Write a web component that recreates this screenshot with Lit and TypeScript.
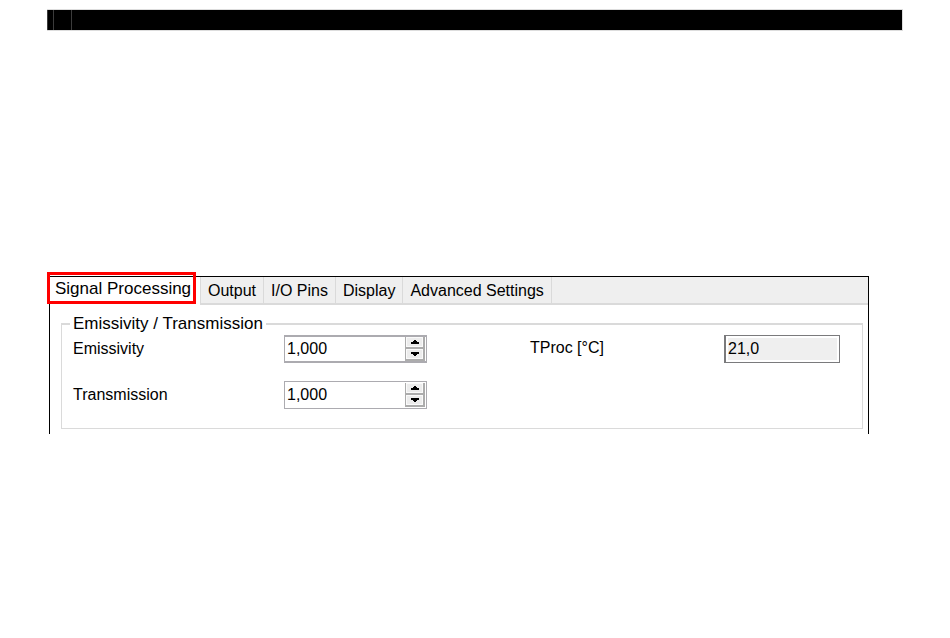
import { LitElement, html, css } from 'lit';
import { customElement, property, state } from 'lit/decorators.js';

@customElement('spin-field')
export class SpinField extends LitElement {
  @property({ type: String })
  label = '';

  @property({ type: Number })
  value = 1;

  static override styles = css`
    :host {
      display: contents;
    }
    .label {
      line-height: 28px;
    }
    .box {
      box-sizing: border-box;
      display: flex;
      align-items: center;
      width: 143px;
      height: 28px;
      border: 1px solid #acabb0;
      background: #fff;
    }
    :host([heavy]) .box {
      border-width: 2px 1px;
    }
    .input {
      flex: 1;
      min-width: 0;
      padding: 0 2px;
      border: 0;
      outline: 0;
      background: transparent;
      color: #000;
      font: inherit;
    }
    .buttons {
      display: flex;
      flex-direction: column;
      gap: 2px;
      box-sizing: border-box;
      width: 20px;
      height: 24px;
      margin-right: 1px;
      padding: 0 2px 2px 1px;
      background: #acacac;
    }
    .step {
      flex: 1;
      display: flex;
      align-items: center;
      justify-content: center;
      padding: 0;
      border: 1px solid #fafafa;
      background: #ececec;
    }
    .arrow {
      display: block;
      width: 8px;
      height: 4px;
    }
  `;

  private _step(delta: number) {
    this.value = Math.min(1, Math.max(0, this.value + delta));
  }

  private _handleChange(e: Event) {
    const parsed = parseFloat((e.target as HTMLInputElement).value.replace(',', '.'));
    if (!isNaN(parsed)) {
      this.value = parsed;
    }
  }

  override render() {
    return html`
      <label class="label" for="value">${this.label}</label>
      <div class="box">
        <input
          id="value"
          class="input"
          type="text"
          .value=${this.value.toFixed(3).replace('.', ',')}
          @change=${this._handleChange}
        />
        <div class="buttons">
          <button class="step" aria-label="Increase" @click=${() => this._step(0.001)}>
            <svg class="arrow" viewBox="0 0 8 4" shape-rendering="crispEdges">
              <path d="M3 0h2v1h1v1h2v2H0V2h2V1h1z" />
            </svg>
          </button>
          <button class="step" aria-label="Decrease" @click=${() => this._step(-0.001)}>
            <svg class="arrow" viewBox="0 0 8 4" shape-rendering="crispEdges">
              <path d="M0 0h8v2H6v1H5v1H3V3H2V2H0z" />
            </svg>
          </button>
        </div>
      </div>
    `;
  }
}

@customElement('app-root')
export class AppRoot extends LitElement {
  @state()
  private _activeTab = 'Signal Processing';

  private _tabs = ['Signal Processing', 'Output', 'I/O Pins', 'Display', 'Advanced Settings'];

  static override styles = css`
    :host {
      display: block;
      padding: 9px 47px 0;
      background: #fff;
      color: #000;
      font: 16px/20px 'Liberation Sans', Arial, sans-serif;
    }
    .header {
      display: flex;
      height: 20px;
      border: 1px solid #ddd;
      border-width: 1px 1px 1px 0;
      background: #000;
    }
    .cell {
      box-sizing: border-box;
      width: 18px;
      border-right: 1px solid #3c3c3c;
    }
    .cell.narrow {
      width: 7px;
      border-left: 1px solid #3c3c3c;
    }
    .panel {
      margin: 245px 34px 0 2px;
      border: 1px solid #000;
      border-bottom: 0;
      padding-bottom: 5px;
    }
    .tabs {
      display: flex;
      height: 28px;
      background: linear-gradient(#efefef 26px, #dadada 26px);
    }
    .tab {
      height: 26px;
      padding: 2px 7px 0;
      border: 0;
      border-right: 1px solid #dadada;
      background: transparent;
      color: #000;
      font: inherit;
      white-space: nowrap;
    }
    .tab.active {
      position: relative;
      height: 28px;
      width: 151px;
      padding: 0 0 5px 5px;
      background: #fff;
      font-size: 17px;
      text-align: left;
    }
    .tab.active::after {
      content: '';
      position: absolute;
      inset: -5px 4px 1px -3px;
      border: 3px solid #f00;
    }
    .group {
      min-width: 0;
      margin: 9px 5px 0 11px;
      padding: 0 0 19px 11px;
      border: 1px solid #dadada;
      border-top-width: 2px;
    }
    .legend {
      margin-left: -3px;
      padding: 0 3px;
      font-size: 17px;
    }
    .fields {
      display: grid;
      grid-template-columns: 211fr 246fr 194fr 138fr;
      row-gap: 18px;
      margin-top: 1px;
    }
    .label {
      line-height: 26px;
    }
    .readout {
      box-sizing: border-box;
      width: 116px;
      height: 28px;
      padding: 0 2px;
      border: 1px solid #7a7a7c;
      border-left-width: 2px;
      outline: 0;
      background: #efefef;
      box-shadow: inset 0 0 0 2px #fff;
      color: #000;
      font: inherit;
    }
  `;

  override render() {
    return html`
      <header class="header">
        <div class="cell narrow"></div>
        <div class="cell"></div>
      </header>
      <main class="panel">
        <div class="tabs" role="tablist">
          ${this._tabs.map(
            tab => html`<button
              class="tab ${tab === this._activeTab ? 'active' : ''}"
              role="tab"
              aria-selected=${tab === this._activeTab}
              @click=${() => (this._activeTab = tab)}
            >${tab}</button>`
          )}
        </div>
        <fieldset class="group">
          <legend class="legend">Emissivity / Transmission</legend>
          <div class="fields">
            <spin-field heavy label="Emissivity"></spin-field>
            <label class="label" for="tproc">TProc [°C]</label>
            <input id="tproc" class="readout" type="text" readonly value="21,0" />
            <spin-field label="Transmission"></spin-field>
          </div>
        </fieldset>
      </main>
    `;
  }
}

declare global {
  interface HTMLElementTagNameMap {
    'app-root': AppRoot;
    'spin-field': SpinField;
  }
}
